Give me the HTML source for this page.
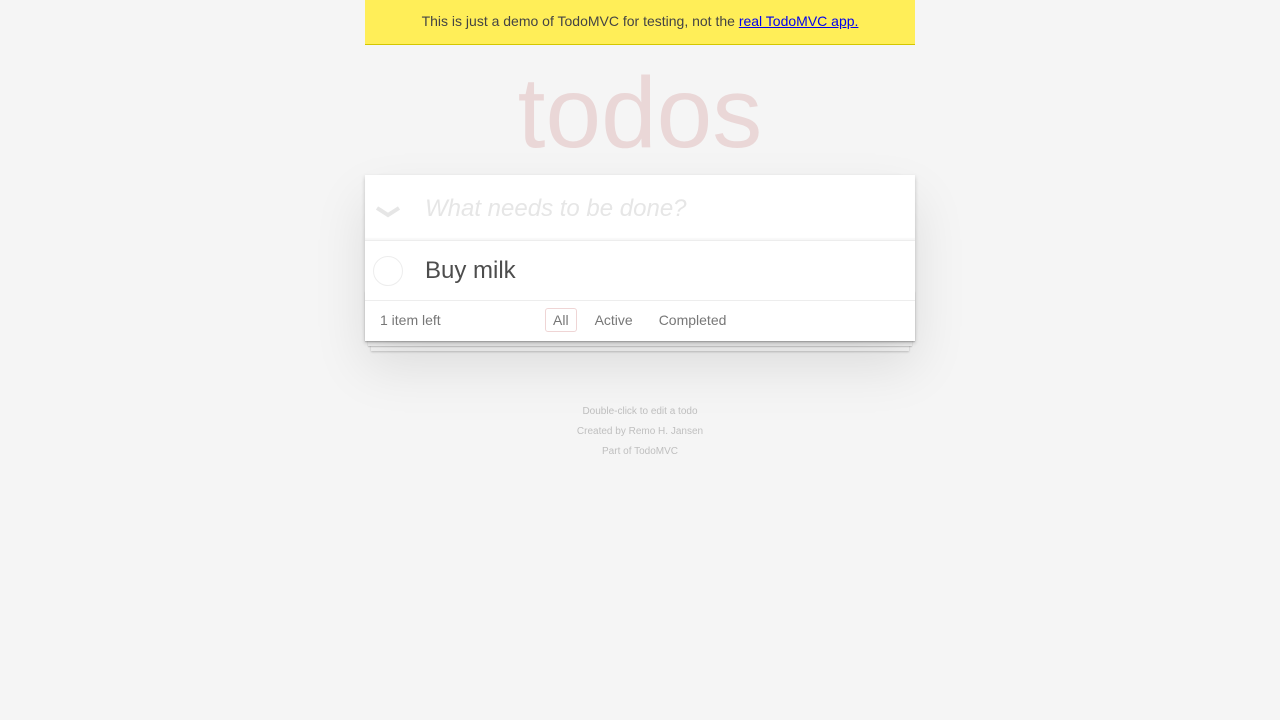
<!DOCTYPE html>
<html><head><meta charset="utf-8"><style>
html,body{margin:0;padding:0}
body{background:#f5f5f5;font:14px "Liberation Sans",Arial,sans-serif;line-height:1.4em;color:#4d4d4d;width:550px;margin:0 auto;position:relative}
.banner{height:44px;background:#ffee58;border-bottom:1px solid #d4c700;text-align:center;line-height:42px;font-size:14px;color:#444}
.banner a{color:#0000ee;text-decoration:underline}
.app{background:#fff;margin:130px 0 40px;position:relative;box-shadow:0 2px 4px rgba(0,0,0,.2),0 25px 50px rgba(0,0,0,.1)}
h1{position:absolute;top:-112px;width:100%;margin:0;font-size:100px;font-weight:300;text-align:center;color:rgba(175,47,47,.15);line-height:1}
.new{height:66px;box-sizing:border-box;padding:17px 16px 16px 60px;font-size:24px;font-style:italic;color:#e6e6e6;line-height:33px;box-shadow:inset 0 -2px 1px rgba(0,0,0,.03);position:relative;border-bottom:1px solid #ededed}
.chev{position:absolute;left:10px;top:27px;width:26px;height:20px}
.item{height:59px;position:relative;font-size:24px;line-height:59px;padding-left:60px;color:#4d4d4d;border-bottom:1px solid #ededed}
.circ{position:absolute;left:8px;top:15px;width:28px;height:28px;border:1px solid #ededed;border-radius:50%}
.foot{height:40px;box-sizing:border-box;padding:9px 15px 11px;color:#777;position:relative;line-height:20px}
.foot:before{content:"";position:absolute;right:0;bottom:0;left:0;height:50px;overflow:hidden;box-shadow:0 1px 1px rgba(0,0,0,.2),0 8px 0 -3px #f6f6f6,0 9px 1px -3px rgba(0,0,0,.2),0 16px 0 -6px #f6f6f6,0 17px 2px -6px rgba(0,0,0,.2);z-index:-1}
.filters{position:absolute;left:175px;top:7px}
.filters a{display:inline-block;padding:1px 7px;border:1px solid transparent;border-radius:3px;margin:0 5px;color:#777;line-height:20px}
.filters a.sel{border-color:rgba(175,47,47,.2)}
.info{text-align:center;color:#bfbfbf;font-size:10px;margin-top:61px}
.info p{margin:0;line-height:20px}
</style></head><body>
<div class="banner">This is just a demo of TodoMVC for testing, not the <a>real TodoMVC app.</a></div>
<div class="app">
<h1>todos</h1>
<div class="new"><svg class="chev" viewBox="0 0 26 20"><path d="M2 6 L13 13 L24 6" stroke="#e6e6e6" stroke-width="4" fill="none"/></svg>What needs to be done?</div>
<div class="item"><div class="circ"></div>Buy milk</div>
<div class="foot"><span>1 item left</span><div class="filters"><a class="sel">All</a><a>Active</a><a>Completed</a></div></div>
</div>
<div class="info"><p>Double-click to edit a todo</p><p>Created by Remo H. Jansen</p><p>Part of TodoMVC</p></div>
</body></html>
